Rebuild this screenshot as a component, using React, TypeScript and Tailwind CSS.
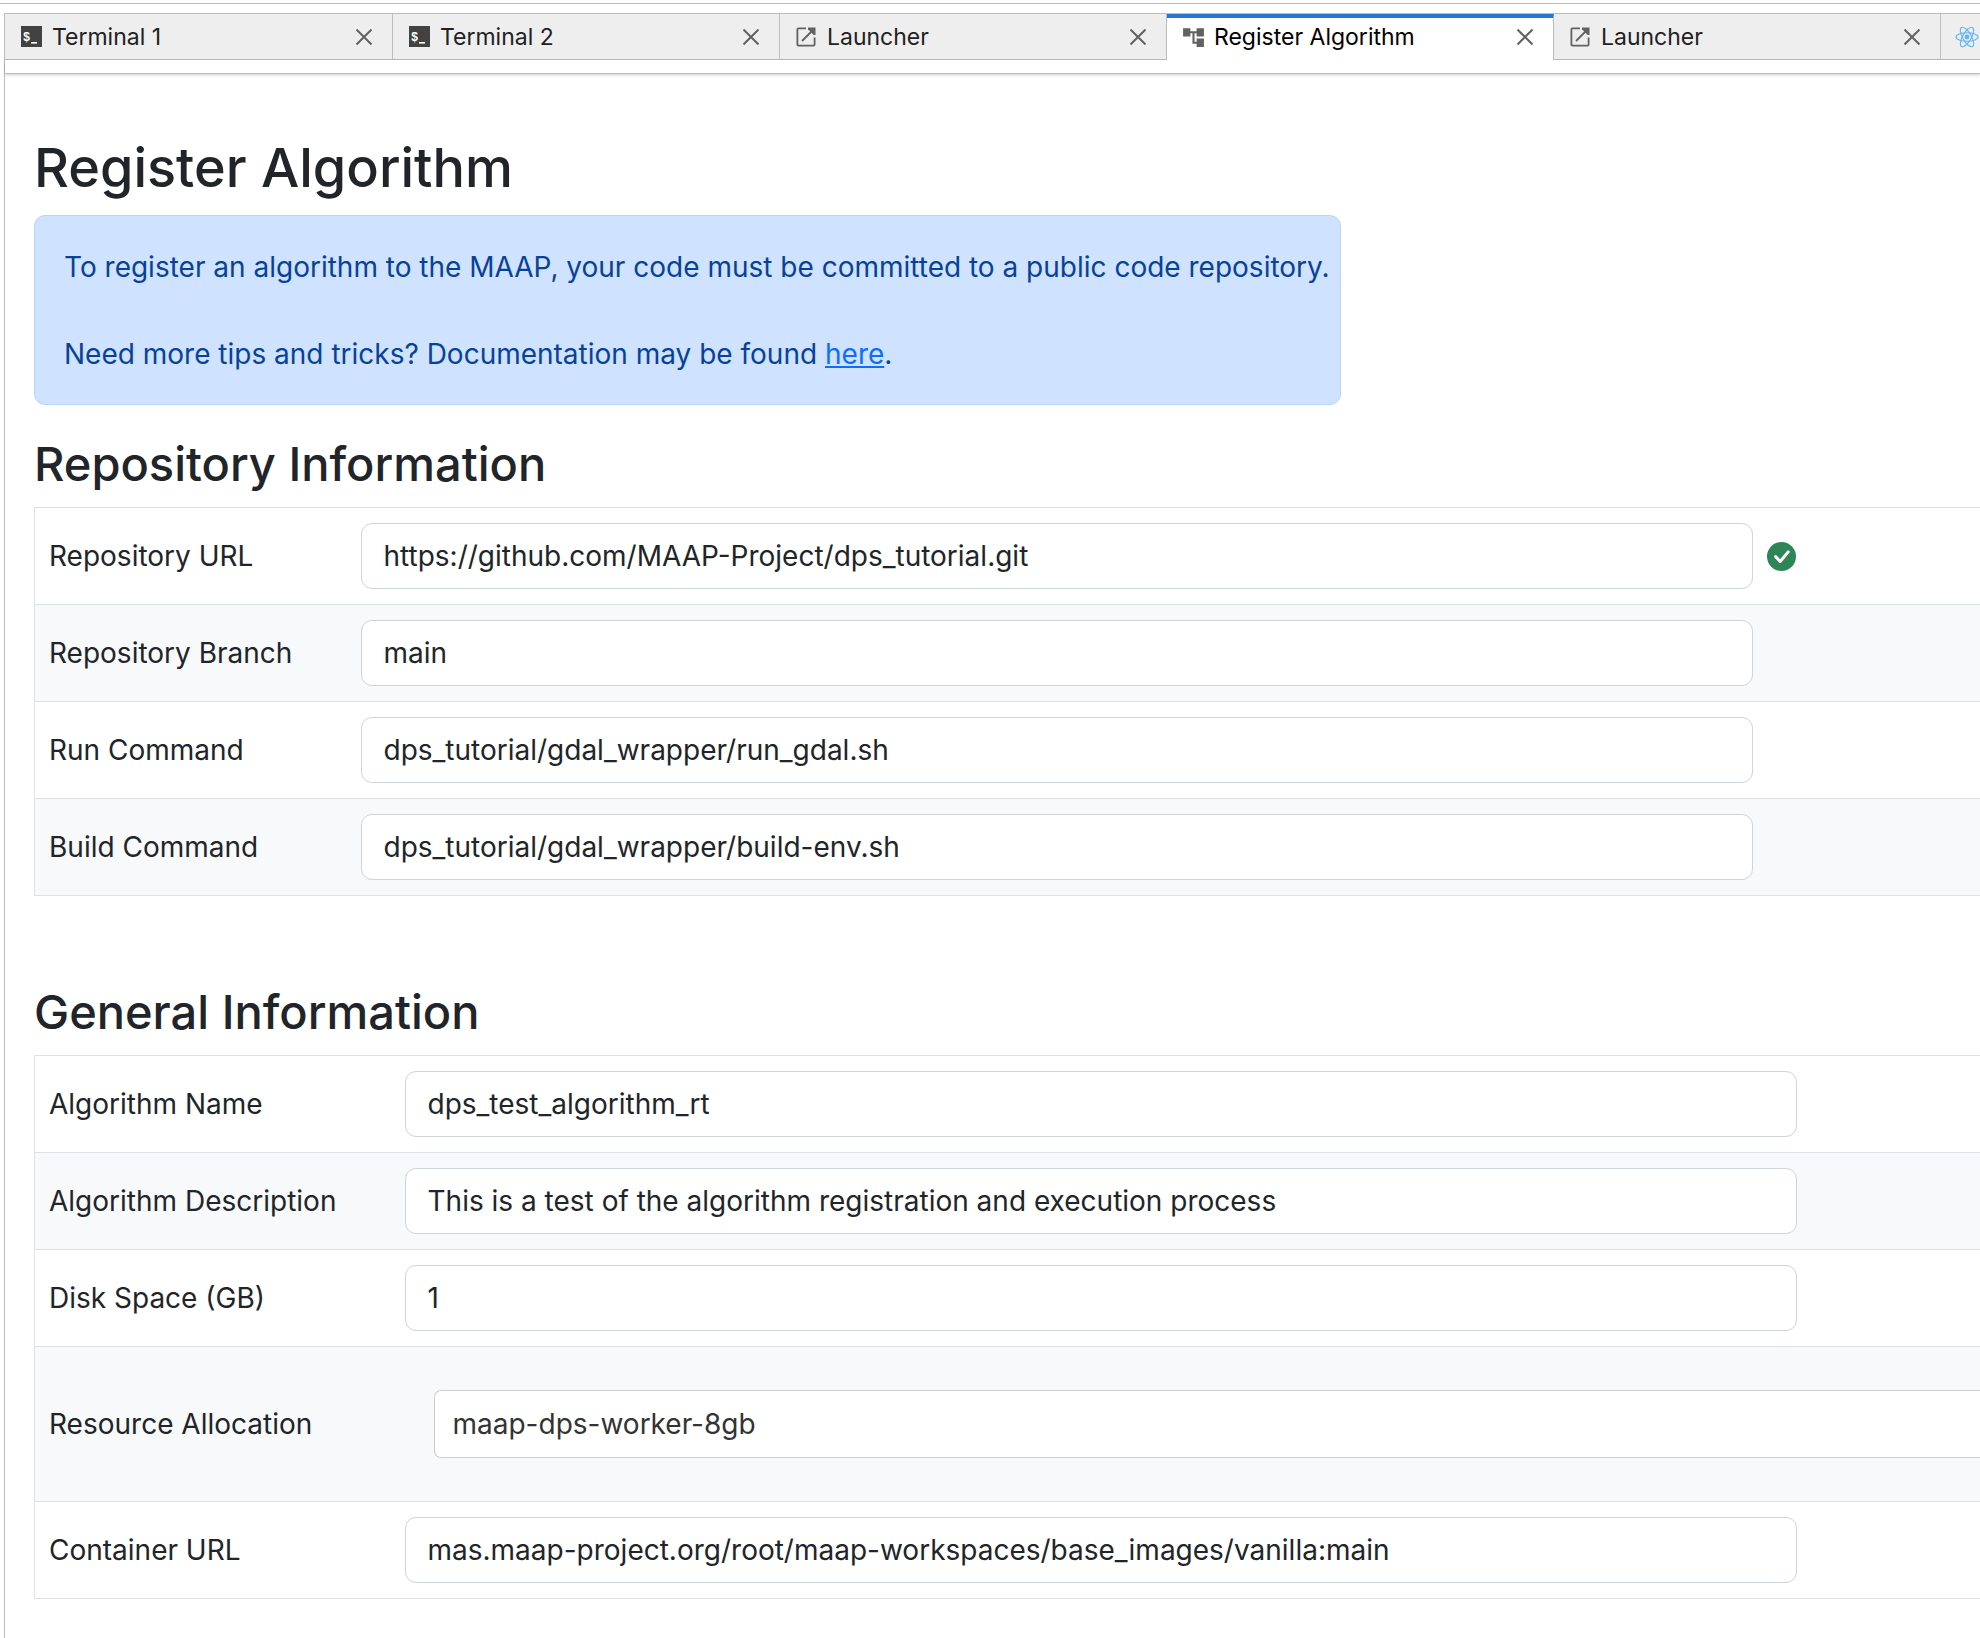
import { useId, useState } from "react";
import type { ReactNode } from "react";
import { MdAccountTree } from "react-icons/md";

function TerminalIcon() {
  return (
    <svg viewBox="0 0 21 21" className="size-[21px] shrink-0" aria-hidden="true">
      <rect width="21" height="21" fill="#424242" />
      <text x="2" y="15" fontFamily="Liberation Mono" fontWeight="700" fontSize="12" fill="#fff">$</text>
      <rect x="10" y="16" width="6" height="1.6" fill="#fff" />
    </svg>
  );
}

function LauncherIcon() {
  return (
    <svg viewBox="0 0 20 20" className="mr-px size-5 shrink-0" fill="none" stroke="#616161" strokeWidth="1.8" aria-hidden="true">
      <path d="M10 1.4H2.4a1 1 0 0 0-1 1v15.2a1 1 0 0 0 1 1h15.2a1 1 0 0 0 1-1V10.5" />
      <path d="M6 14 17 3" />
      <path d="M12 .5h7.5V8h-1.8L12 2.3z" fill="#616161" stroke="none" />
    </svg>
  );
}

function ReactIcon() {
  return (
    <svg viewBox="0 0 24 24" className="-ml-[2px] size-6 shrink-0" fill="none" stroke="#61b5f8" strokeWidth="1.1" aria-hidden="true">
      <ellipse cx="12" cy="12" rx="11" ry="4.3" />
      <ellipse cx="12" cy="12" rx="11" ry="4.3" transform="rotate(60 12 12)" />
      <ellipse cx="12" cy="12" rx="11" ry="4.3" transform="rotate(120 12 12)" />
      <circle cx="12" cy="12" r="2.4" fill="#61b5f8" stroke="none" />
    </svg>
  );
}

function CloseIcon() {
  return (
    <svg viewBox="0 0 16 16" className="size-4" stroke="#616161" strokeWidth="2" aria-hidden="true">
      <path d="M0.5 0.5l15 15M15.5 0.5l-15 15" />
    </svg>
  );
}

function ValidIcon() {
  return (
    <svg viewBox="0 0 29 29" className="size-[29px] shrink-0" role="img" aria-label="Valid">
      <circle cx="14.5" cy="14.5" r="14.5" fill="#2e8555" />
      <path d="M8.5 14.5l4.7 5 8-9.6" fill="none" stroke="#fff" strokeWidth="3" strokeLinecap="round" strokeLinejoin="round" />
    </svg>
  );
}

function Tab({ icon, title, active }: { icon: ReactNode; title: string; active?: boolean }) {
  return (
    <div
      className={
        active
          ? "-mb-px flex w-[387px] shrink-0 items-center border-t-4 border-r border-t-[#2876d2] border-r-[#bdbdbd] bg-white pr-5 pb-1 pl-4 text-black"
          : "flex w-[387px] shrink-0 items-center border-r border-[#bdbdbd] bg-[#eeeeee] pr-5 pl-4 text-[#212121] first:w-[388px]"
      }
    >
      <button type="button" role="tab" aria-selected={!!active} className="flex flex-1 items-center gap-[10px]">
        {icon}
        <span className="text-[23px] leading-7 whitespace-nowrap">{title}</span>
      </button>
      <button type="button" aria-label={`Close ${title}`}>
        <CloseIcon />
      </button>
    </div>
  );
}

function Row({ label, children }: { label: string; children: (id: string) => ReactNode }) {
  const id = useId();
  return (
    <tr className="border-y border-[#dee2e6] even:bg-[#f8f9fb]">
      <th scope="row" className="py-[15px] pl-[14px] text-left font-normal whitespace-nowrap">
        <label htmlFor={id}>{label}</label>
      </th>
      <td className="py-[15px]">{children(id)}</td>
    </tr>
  );
}

function TextRow({ label, initial, valid }: { label: string; initial: string; valid?: boolean }) {
  const [value, setValue] = useState(initial);
  return (
    <Row label={label}>
      {(id) => (
        <div className="flex items-center gap-[14px]">
          <input
            id={id}
            type="text"
            value={value}
            onChange={(e) => setValue(e.target.value)}
            className="h-[66px] w-full max-w-[1392px] rounded-[11px] border border-[#ced4da] bg-white px-[22px]"
          />
          {valid && <ValidIcon />}
        </div>
      )}
    </Row>
  );
}

export default function App() {
  return (
    <div className="min-h-screen overflow-hidden bg-white pt-[3px] font-['Inter',sans-serif] text-[28px] leading-[43px] text-[#212529]">
      <div className="h-[10px] border-t border-[#bdbdbd]" />
      <div className="ml-1 min-h-[1625px] border-l border-[#bdbdbd]">
        <div role="tablist" className="flex h-[47px] overflow-x-clip border-y border-[#bdbdbd]">
          <Tab icon={<TerminalIcon />} title="Terminal 1" />
          <Tab icon={<TerminalIcon />} title="Terminal 2" />
          <Tab icon={<LauncherIcon />} title="Launcher" />
          <Tab icon={<MdAccountTree className="-mx-[2px] size-[25px] shrink-0 text-[#616161]" />} title="Register Algorithm" active />
          <Tab icon={<LauncherIcon />} title="Launcher" />
          <Tab icon={<ReactIcon />} title="" />
        </div>
        <div className="h-[14px] border-b border-[#bdbdbd] shadow-[0_1px_3px_rgba(0,0,0,0.2)]" />

        <main className="pl-[29px]">
          <h1 className="pt-[60px] text-[54px] leading-[68px] font-medium">Register Algorithm</h1>
          <div className="mt-[13px] w-fit rounded-[11px] border border-[#b6d4fe] bg-[#cfe2ff] pt-[30px] pr-[10px] pb-7 pl-[29px] text-[#084298]">
            <p>To register an algorithm to the MAAP, your code must be committed to a public code repository.</p>
            <p className="mt-11">
              Need more tips and tricks? Documentation may be found{" "}
              <a href="#docs" className="text-[#0d6efd] underline">here</a>.
            </p>
          </div>

          <h2 className="mt-[29px] text-[47px] leading-[60px] font-medium">Repository Information</h2>
          <table className="mt-[13px] w-full border-collapse border-l border-[#dee2e6]">
            <colgroup>
              <col className="w-[326px]" />
              <col />
            </colgroup>
            <tbody>
              <TextRow label="Repository URL" initial="https://github.com/MAAP-Project/dps_tutorial.git" valid />
              <TextRow label="Repository Branch" initial="main" />
              <TextRow label="Run Command" initial="dps_tutorial/gdal_wrapper/run_gdal.sh" />
              <TextRow label="Build Command" initial="dps_tutorial/gdal_wrapper/build-env.sh" />
            </tbody>
          </table>

          <h2 className="mt-[86px] text-[47px] leading-[60px] font-medium">General Information</h2>
          <table className="mt-[13px] w-full border-collapse border-l border-[#dee2e6]">
            <colgroup>
              <col className="w-[370px]" />
              <col />
            </colgroup>
            <tbody>
              <TextRow label="Algorithm Name" initial="dps_test_algorithm_rt" />
              <TextRow label="Algorithm Description" initial="This is a test of the algorithm registration and execution process" />
              <TextRow label="Disk Space (GB)" initial="1" />
              <Row label="Resource Allocation">
                {(id) => (
                  <div className="py-7 pl-[29px]">
                    <select
                      id={id}
                      defaultValue="maap-dps-worker-8gb"
                      className="block h-[68px] w-full appearance-none rounded-l-[7px] border border-r-0 border-[#cccccc] bg-white px-[18px] text-[#333333]"
                    >
                      <option>maap-dps-worker-8gb</option>
                    </select>
                  </div>
                )}
              </Row>
              <TextRow label="Container URL" initial="mas.maap-project.org/root/maap-workspaces/base_images/vanilla:main" />
            </tbody>
          </table>
        </main>
      </div>
    </div>
  );
}
